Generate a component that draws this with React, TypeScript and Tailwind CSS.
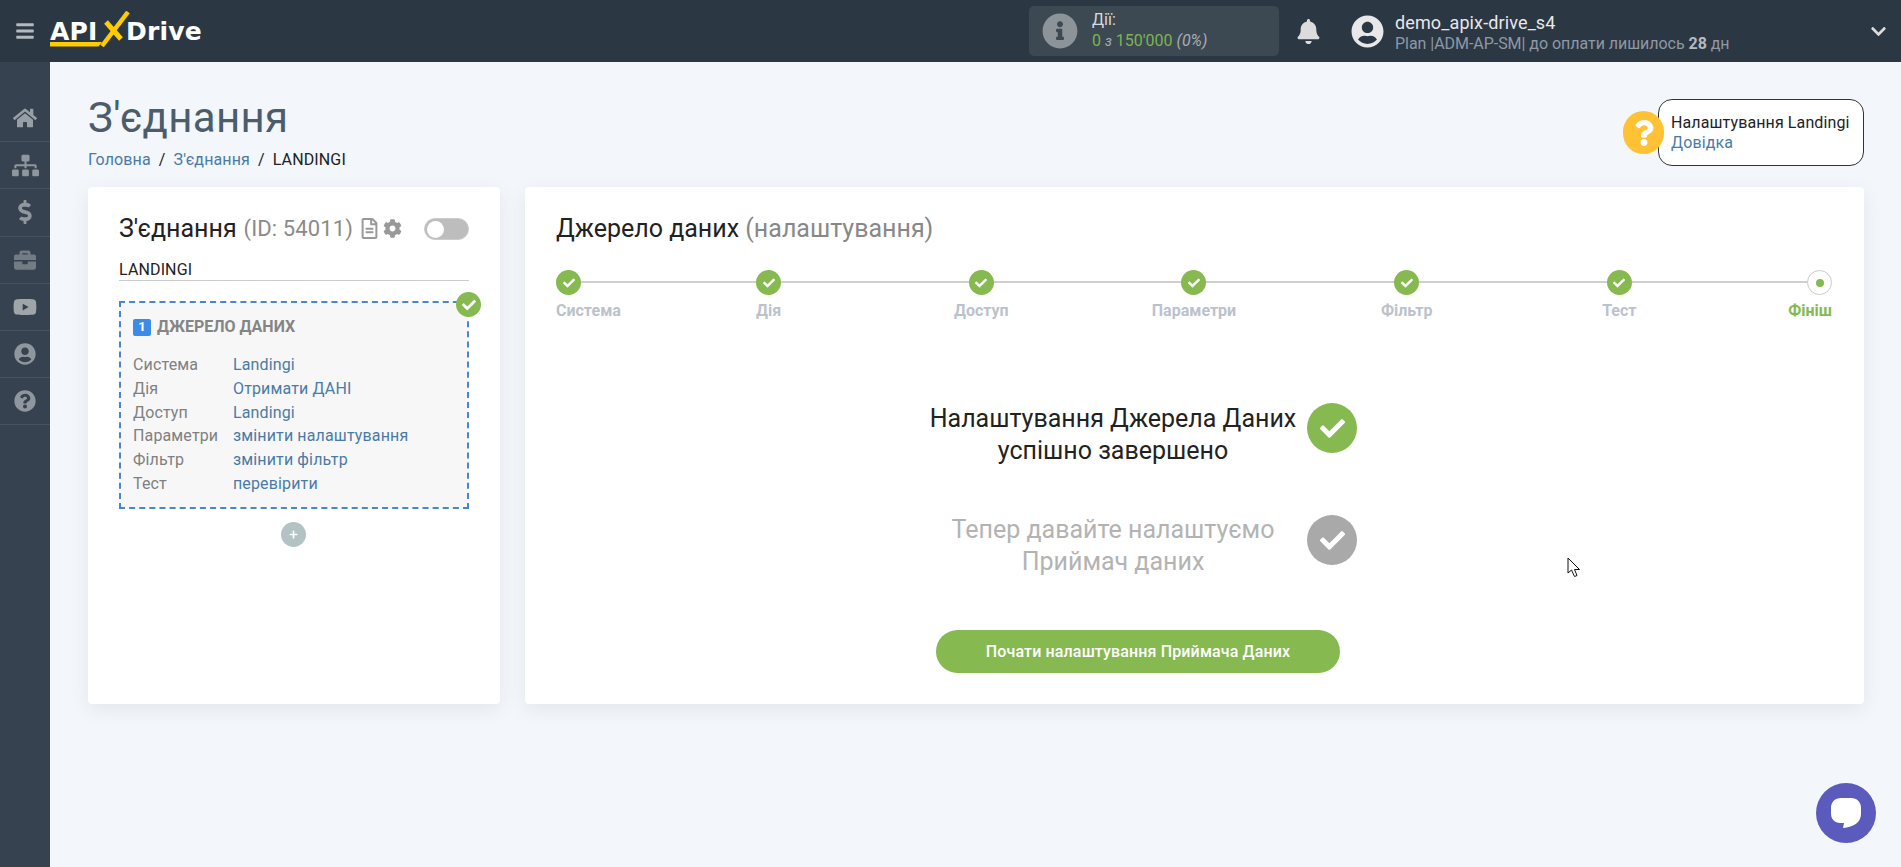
import React from "react";
import { FaBars, FaBell, FaBriefcase, FaCheck, FaChevronDown, FaCog, FaDollarSign, FaHome, FaInfoCircle, FaPlus, FaQuestion, FaQuestionCircle, FaRegFileAlt, FaSitemap, FaUserCircle, FaYoutube } from "react-icons/fa";

const side = [
  { I: FaHome, s: 24, c: "#989ea5" },
  { I: FaSitemap, s: 27, c: "#8f969e" },
  { I: FaDollarSign, s: 24, c: "#8f969e" },
  { I: FaBriefcase, s: 22, c: "#737b85" },
  { I: FaYoutube, s: 24, c: "#a0a5aa" },
  { I: FaUserCircle, s: 22, c: "#8f969e" },
  { I: FaQuestionCircle, s: 22, c: "#8f969e" },
];

const rows = [
  ["Система", "Landingi"],
  ["Дія", "Отримати ДАНІ"],
  ["Доступ", "Landingi"],
  ["Параметри", "змінити налаштування"],
  ["Фільтр", "змінити фільтр"],
  ["Тест", "перевірити"],
];

const steps = ["Дія", "Доступ", "Параметри", "Фільтр", "Тест"];

function Dot() {
  return (
    <div className="w-[25px] h-[25px] rounded-full bg-[#86b94f] flex items-center justify-center relative">
      <FaCheck size={12} color="#fff" />
    </div>
  );
}

function Logo() {
  return (
    <div className="relative w-[152px] h-[40px] ml-[15px] flex items-center font-['DejaVu_Sans',sans-serif] text-white font-bold text-[25px] tracking-[0.2px]">
      <span className="leading-none w-[77px]">API</span>
      <span className="leading-none">Drive</span>
      <svg className="absolute left-0 top-0" width="152" height="40" viewBox="0 0 152 40" fill="none">
        <path d="M0 31 L52 31 L48.5 35.5 L0 35.5 Z" fill="#ffcc00" />
        <path d="M52 35 L78 1" stroke="#ffcc00" strokeWidth="4.5" />
        <path d="M56 11 L71 28" stroke="#ffcc00" strokeWidth="5" />
      </svg>
    </div>
  );
}

export default function App() {
  return (
    <div className="relative h-[867px] overflow-hidden bg-[#f3f6fb] font-['Roboto',sans-serif] flex flex-col">
      <header className="h-[62px] shrink-0 bg-[#2c3744] flex items-center">
        <FaBars size={20} color="#b4b9be" className="ml-[15px]" />
        <Logo />
        <div className="flex-1" />
        <div className="w-[250px] h-[50px] rounded-[5px] bg-[#3c4852] flex items-center pl-[13px]">
          <FaInfoCircle size={36} color="#8c9399" />
          <div className="ml-[14px] pb-[2px] text-[16px] leading-[21px]">
            <div className="text-[#d8dadc]">Дії:</div>
            <div className="text-[#7fb354]">0 <span className="text-[#a8adb2] italic text-[14px]">з</span> 150'000 <span className="text-[#a8adb2] italic">(0%)</span></div>
          </div>
        </div>
        <FaBell size={25} color="#dcdcdc" className="ml-[17px]" />
        <FaUserCircle size={33} color="#e8e8e8" className="ml-[30px]" />
        <div className="ml-[11px] w-[475px] pt-[2px]">
          <div className="text-[18px] leading-[22px] text-[#e8e8e8] tracking-[0.12px]">demo_apix-drive_s4</div>
          <div className="text-[16px] leading-[19px] text-[#8e99a4] tracking-[-0.04px]">Plan |ADM-AP-SM| до оплати лишилось <b className="text-[#b4bac0]">28</b> дн</div>
        </div>
        <FaChevronDown size={17} color="#dcdcdc" className="mr-[14px]" />
      </header>
      <div className="flex flex-1">
        <aside className="w-[50px] shrink-0 bg-[#36424f] pt-[33px]">
          {side.map(({ I, s, c }, i) => (
            <div key={i} className="h-[47.2px] border-b border-[#46525f] flex items-center justify-center">
              <I size={s} color={c} />
            </div>
          ))}
        </aside>
        <main className="flex-1 pl-[38px] pr-[37px] pt-[32px]">
          <div className="flex justify-between items-start h-[93px]">
            <div>
              <h1 className="text-[42px] leading-[48px] text-[#4b5c6b] tracking-[0.3px]">З'єднання</h1>
              <div className="mt-[6px] text-[16px] leading-[24px] flex text-[#222] tracking-[0.13px]">
                <span className="text-[#4a7ba8]">Головна</span>
                <span className="mx-[8px]">/</span>
                <span className="text-[#4a7ba8]">З'єднання</span>
                <span className="mx-[8px]">/</span>
                <span>LANDINGI</span>
              </div>
            </div>
            <div className="flex items-center mt-[5px]">
              <div className="relative z-10 -mr-[6px] w-[41px] h-[43px] rounded-full bg-[#ffc234] flex items-center justify-center">
                <FaQuestion size={26} color="#fff" />
              </div>
              <div className="w-[206px] h-[67px] rounded-[14px] border border-[#333] bg-white pl-[12px] pt-[13px] text-[16px] leading-[20px] tracking-[0.11px]">
                <div className="text-[#222]">Налаштування Landingi</div>
                <div className="text-[#4a7ba8]">Довідка</div>
              </div>
            </div>
          </div>
          <div className="flex gap-[25px] h-[517px]">
            <section className="w-[412px] rounded-[4px] bg-white shadow-[0_5px_20px_rgba(0,0,0,0.07)] px-[31px] pt-[26px]">
              <div className="flex items-center h-[31px]">
                <span className="text-[25px] text-[#222]">З'єднання</span>
                <span className="text-[22px] text-[#8a8a8a] ml-[7px] tracking-[0.1px]">(ID: 54011)</span>
                <FaRegFileAlt size={21} color="#999" className="ml-[6px]" />
                <FaCog size={19} color="#999" className="ml-[3px]" />
                <div className="ml-auto w-[45px] h-[22px] rounded-full bg-[#bdbdbd] p-[2px] border border-[#ccc]">
                  <div className="w-[17px] h-[17px] rounded-full bg-white" />
                </div>
              </div>
              <div className="mt-[13px] h-[23px] border-b border-[#ccc] text-[16px] leading-[26px] text-[#222] box-content tracking-[0.13px]">LANDINGI</div>
              <div className="relative mt-[20px] h-[208px] border-2 border-dashed border-[#4a86d0] bg-[#f7f7f7] px-[12px] pt-[14px]">
                <div className="absolute -top-[11px] -right-[14px] w-[25px] h-[25px] rounded-full bg-[#86b94f] flex items-center justify-center">
                  <FaCheck size={14} color="#fff" />
                </div>
                <div className="flex items-center h-[20px] font-bold text-[16px] text-[#858585]">
                  <span className="w-[18px] h-[17px] rounded-[2px] bg-[#3b8beb] text-white text-[13px] flex items-center justify-center mr-[6px]">1</span>
                  ДЖЕРЕЛО ДАНИХ
                </div>
                <div className="mt-[16px] grid grid-cols-[100px_1fr] text-[16px] leading-[23.8px] tracking-[0.14px]">
                  {rows.map(([a, b]) => (
                    <React.Fragment key={a}>
                      <span className="text-[#808080]">{a}</span>
                      <span className="text-[#4a7ba8]">{b}</span>
                    </React.Fragment>
                  ))}
                </div>
              </div>
              <div className="mt-[13px] ml-[162px] w-[25px] h-[25px] rounded-full bg-[#b3c3c3] flex items-center justify-center">
                <FaPlus size={9} color="#fff" />
              </div>
            </section>
            <section className="flex-1 rounded-[4px] bg-white shadow-[0_5px_20px_rgba(0,0,0,0.07)] pl-[31px] pr-[32px] pt-[26px]">
              <div className="h-[31px] leading-[32px] text-[25px] text-[#222]">
                Джерело даних <span className="text-[#888]">(налаштування)</span>
              </div>
              <div className="relative mt-[26px] grid grid-cols-[1fr_2fr_2fr_2fr_2fr_2fr_1fr]">
                <div className="absolute left-[12px] right-[12px] top-[11px] h-[2px] bg-[#d0d0d0]" />
                <div className="flex flex-col items-start relative">
                  <Dot />
                  <span className="mt-[4px] text-[16px] leading-[24px] font-bold text-[#bcc2cb]">Система</span>
                </div>
                {steps.map((s) => (
                  <div key={s} className="flex flex-col items-center relative">
                    <Dot />
                    <span className="mt-[4px] text-[16px] leading-[24px] font-bold text-[#bcc2cb]">{s}</span>
                  </div>
                ))}
                <div className="flex flex-col items-end relative">
                  <div className="w-[25px] h-[25px] rounded-full border border-[#ccc] bg-white flex items-center justify-center">
                    <div className="w-[8px] h-[8px] rounded-full bg-[#86b94f]" />
                  </div>
                  <span className="mt-[4px] text-[16px] leading-[24px] font-bold text-[#86b94f]">Фініш</span>
                </div>
              </div>
              <div className="mt-[80px] ml-[368px] flex items-start">
                <div className="w-[378px] text-center text-[25px] leading-[32px] text-[#222]">Налаштування Джерела Даних<br />успішно завершено</div>
                <div className="ml-[5px] w-[50px] h-[50px] rounded-full bg-[#86b94f] flex items-center justify-center"><FaCheck size={25} color="#fff" /></div>
              </div>
              <div className="mt-[48px] ml-[368px] flex items-start">
                <div className="-mt-[1px] w-[378px] text-center text-[25px] leading-[32px] text-[#b3b3b3]">Тепер давайте налаштуємо<br />Приймач даних</div>
                <div className="ml-[5px] w-[50px] h-[50px] rounded-full bg-[#a9a9a9] flex items-center justify-center"><FaCheck size={25} color="#fff" /></div>
              </div>
              <button className="mt-[52px] ml-[380px] w-[404px] h-[43px] rounded-full bg-[#86b94f] text-white text-[16px] font-medium tracking-[0.14px]">Почати налаштування Приймача Даних</button>
            </section>
          </div>
        </main>
      </div>
      <svg className="absolute left-[1567px] top-[557px]" width="14" height="21" viewBox="0 0 14 21" fill="#fff" stroke="#111" strokeWidth="1">
        <path d="M1 1 L1 16 L4.5 13 L7.5 19.5 L10 18.5 L7.5 12.5 L12.5 12.5 Z" />
      </svg>
      <div className="absolute left-[1816px] top-[783px] w-[60px] h-[60px] rounded-full bg-[#5b5bbd] flex items-center justify-center">
        <svg width="30" height="30" viewBox="0 0 30 30" fill="#fff">
          <path d="M10 0 H20 C26 0 30 4 30 10 V16 C30 24 23 29 12 30 L13 25 H9 C4 25 0 21 0 16 V10 C0 4 4 0 10 0 Z" />
        </svg>
      </div>
    </div>
  );
}
